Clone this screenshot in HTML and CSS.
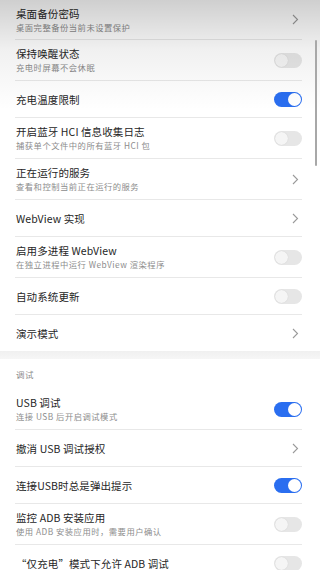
FILE: index.html
```html
<!DOCTYPE html>
<html lang="zh">
<head>
<meta charset="utf-8">
<link rel="stylesheet" href="styles.css">
</head>
<body>
<div class="screen">
  <div class="list">
    <div class="row double first">
      <div class="text"><div class="title">桌面备份密码</div><div class="sub">桌面完整备份当前未设置保护</div></div>
      <svg class="chev" width="7" height="11" viewBox="0 0 7 11"><polyline points="1,1 5.5,5.5 1,10" fill="none" stroke="#9a9a9a" stroke-width="1.1"/></svg>
    </div>
    <div class="row double">
      <div class="text"><div class="title">保持唤醒状态</div><div class="sub">充电时屏幕不会休眠</div></div>
      <span class="toggle"></span>
    </div>
    <div class="row single">
      <div class="text"><div class="title">充电温度限制</div></div>
      <span class="toggle on"></span>
    </div>
    <div class="row double">
      <div class="text"><div class="title">开启蓝牙 HCI 信息收集日志</div><div class="sub">捕获单个文件中的所有蓝牙 HCI 包</div></div>
      <span class="toggle"></span>
    </div>
    <div class="row double">
      <div class="text"><div class="title">正在运行的服务</div><div class="sub">查看和控制当前正在运行的服务</div></div>
      <svg class="chev" width="7" height="11" viewBox="0 0 7 11"><polyline points="1,1 5.5,5.5 1,10" fill="none" stroke="#9a9a9a" stroke-width="1.1"/></svg>
    </div>
    <div class="row single">
      <div class="text"><div class="title">WebView 实现</div></div>
      <svg class="chev" width="7" height="11" viewBox="0 0 7 11"><polyline points="1,1 5.5,5.5 1,10" fill="none" stroke="#9a9a9a" stroke-width="1.1"/></svg>
    </div>
    <div class="row double">
      <div class="text"><div class="title">启用多进程 WebView</div><div class="sub">在独立进程中运行 WebView 渲染程序</div></div>
      <span class="toggle"></span>
    </div>
    <div class="row single">
      <div class="text"><div class="title">自动系统更新</div></div>
      <span class="toggle"></span>
    </div>
    <div class="row single last">
      <div class="text"><div class="title">演示模式</div></div>
      <svg class="chev" width="7" height="11" viewBox="0 0 7 11"><polyline points="1,1 5.5,5.5 1,10" fill="none" stroke="#9a9a9a" stroke-width="1.1"/></svg>
    </div>
  </div>
  <div class="band"></div>
  <div class="list">
    <div class="section">调试</div>
    <div class="row double">
      <div class="text"><div class="title">USB 调试</div><div class="sub">连接 USB 后开启调试模式</div></div>
      <span class="toggle on"></span>
    </div>
    <div class="row single">
      <div class="text"><div class="title">撤消 USB 调试授权</div></div>
      <svg class="chev" width="7" height="11" viewBox="0 0 7 11"><polyline points="1,1 5.5,5.5 1,10" fill="none" stroke="#9a9a9a" stroke-width="1.1"/></svg>
    </div>
    <div class="row single">
      <div class="text"><div class="title">连接USB时总是弹出提示</div></div>
      <span class="toggle on"></span>
    </div>
    <div class="row double">
      <div class="text"><div class="title">监控 ADB 安装应用</div><div class="sub">使用 ADB 安装应用时，需要用户确认</div></div>
      <span class="toggle"></span>
    </div>
    <div class="row single">
      <div class="text"><div class="title">“仅充电”模式下允许 ADB 调试</div></div>
      <span class="toggle"></span>
    </div>
  </div>
  <div class="shade"></div>
  <div class="scrollbar"></div>
</div>
</body>
</html>
```
FILE: styles.css
```css
html, body {
  margin: 0;
  padding: 0;
  background: #ffffff;
}
.screen {
  position: relative;
  width: 320px;
  height: 570px;
  overflow: hidden;
  font-family: "Noto Sans CJK SC", "Noto Sans", sans-serif;
  background: #ffffff;
}
.list {
  padding: 0 18px 0 15px;
}
.row {
  display: flex;
  align-items: center;
  justify-content: space-between;
  box-sizing: border-box;
  border-bottom: 1px solid #e8e8e8;
  padding-left: 1px;
}
.row.double { height: 41px; }
.row.single { height: 37px; }
.row.first { height: 40px; }
.row.last { border-bottom: none; height: 36px; }
.text {
  display: flex;
  flex-direction: column;
}
.title {
  font-size: 10.5px;
  line-height: 15px;
  letter-spacing: 0.1px;
  color: #262626;
}
.sub {
  font-size: 8.3px;
  line-height: 13px;
  letter-spacing: 0.5px;
  color: #8c8c8c;
}
.chev {
  margin-right: 3px;
  flex: none;
}
.toggle {
  position: relative;
  flex: none;
  width: 28px;
  height: 15px;
  border-radius: 8px;
  background: #e6e6e6;
}
.toggle::after {
  content: "";
  position: absolute;
  top: 1px;
  left: 1px;
  width: 13px;
  height: 13px;
  border-radius: 50%;
  background: #f5f5f5;
  box-shadow: 0 0 1px rgba(0,0,0,0.15);
}
.toggle.on {
  background: #2a6ef0;
}
.toggle.on::after {
  left: 14px;
  background: #ffffff;
  box-shadow: none;
}
.band {
  height: 8px;
  background: linear-gradient(#f0f0f0, #f6f6f6);
}
.section {
  height: 30px;
  display: flex;
  align-items: center;
  padding-left: 1px;
  font-size: 8.5px;
  letter-spacing: 0.5px;
  color: #8c8c8c;
}
.shade {
  position: absolute;
  left: 0;
  top: 0;
  width: 320px;
  height: 110px;
  background: linear-gradient(rgba(0,0,0,0.19), rgba(0,0,0,0.06) 45%, rgba(0,0,0,0));
  pointer-events: none;
}
.scrollbar {
  position: absolute;
  left: 315px;
  top: 40px;
  width: 2px;
  height: 126px;
  background: #a8a8a8;
  border-radius: 1px;
}
```
